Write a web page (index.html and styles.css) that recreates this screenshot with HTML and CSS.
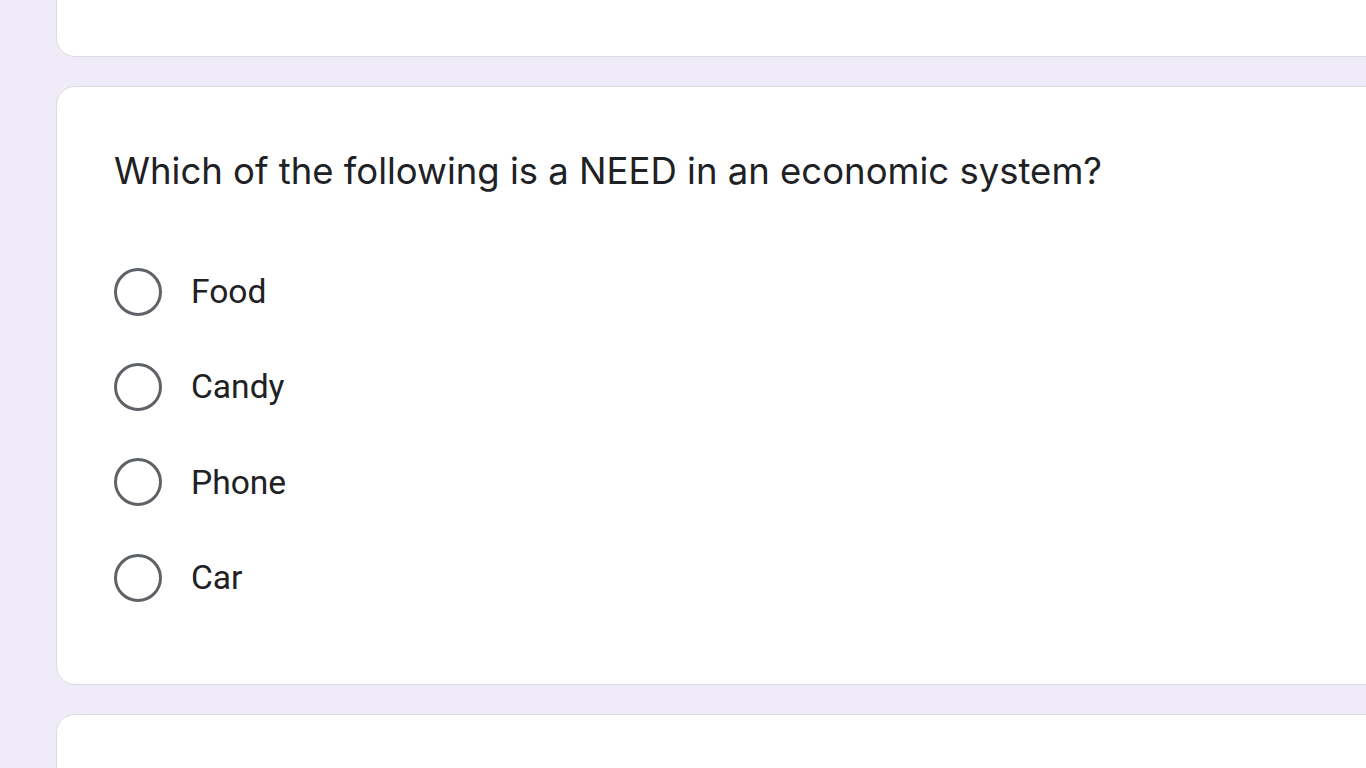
FILE: index.html
```html
<!DOCTYPE html>
<html>
<head>
<meta charset="utf-8">
<link rel="stylesheet" href="styles.css">
</head>
<body>
<div class="page">
  <div class="card card-prev"></div>
  <div class="card card-question">
    <div class="question">Which of the following is a NEED in an economic system?</div>
    <div class="options">
      <label class="option"><span class="radio"></span><span class="label">Food</span></label>
      <label class="option"><span class="radio"></span><span class="label">Candy</span></label>
      <label class="option"><span class="radio"></span><span class="label">Phone</span></label>
      <label class="option"><span class="radio"></span><span class="label">Car</span></label>
    </div>
  </div>
  <div class="card card-next"></div>
</div>
</body>
</html>
```
FILE: styles.css
```css
html, body {
  margin: 0;
  padding: 0;
  background: #f0ebf8;
  overflow: hidden;
  height: 768px;
}
.page {
  display: flex;
  flex-direction: column;
  gap: 29px;
  padding-left: 56px;
  margin-top: -200px;
}
.card {
  width: 1400px;
  background: #fff;
  border: 1px solid #dadce0;
  border-radius: 19px;
  box-sizing: border-box;
}
.card-prev {
  height: 257px;
}
.card-question {
  height: 599px;
  padding: 58px 0 0 57px;
}
.card-next {
  height: 300px;
}
.question {
  font-family: Inter, sans-serif;
  font-size: 36.5px;
  line-height: 52px;
  color: #202124;
  letter-spacing: 0;
}
.options {
  margin-top: 47px;
  display: flex;
  flex-direction: column;
}
.option {
  display: flex;
  align-items: center;
  height: 95.33px;
}
.radio {
  width: 48px;
  height: 48px;
  box-sizing: border-box;
  border: 3px solid #5f6368;
  border-radius: 50%;
  flex: none;
}
.label {
  margin-left: 29px;
  font-family: Roboto, sans-serif;
  font-size: 33.6px;
  color: #202124;
}
```
